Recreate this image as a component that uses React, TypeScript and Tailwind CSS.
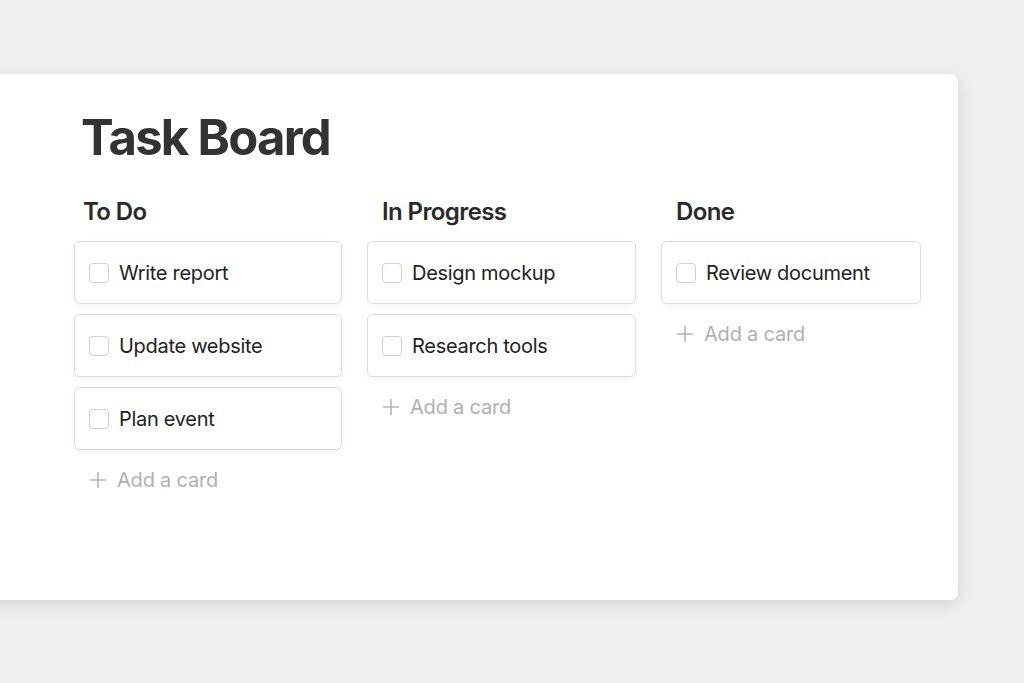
import React from "react";

type Col = { title: string; cards: string[]; w: string; hp: string };

const cols: Col[] = [
  { title: "To Do", cards: ["Write report", "Update website", "Plan event"], w: "w-[268px]", hp: "pl-[9px]" },
  { title: "In Progress", cards: ["Design mockup", "Research tools"], w: "w-[269px]", hp: "pl-[15px]" },
  { title: "Done", cards: ["Review document"], w: "w-[260px]", hp: "pl-[15px]" },
];

function Plus() {
  return (
    <svg width="18" height="18" viewBox="0 0 18 18" fill="none" stroke="#b5b5b5" strokeWidth="1.6" strokeLinecap="round">
      <path d="M9 1.5v15M1.5 9h15" />
    </svg>
  );
}

export default function App() {
  return (
    <div
      className="w-[1024px] h-[683px] bg-[#efefef] overflow-hidden pt-[74px]"
      style={{ fontFamily: "Inter, 'Noto Sans', sans-serif" }}
    >
      <div className="-ml-[20px] w-[978px] h-[526px] bg-white rounded-[8px] shadow-[0_4px_16px_rgba(0,0,0,0.12)] pl-[94px] pt-[38px]">
        <h1 className="text-[49px] leading-[52px] font-bold tracking-[-0.035em] text-[#333333] pl-[7px]">Task Board</h1>
        <div className="flex gap-[25px] mt-[33px]">
          {cols.map((c) => (
            <div key={c.title} className={`${c.w} flex flex-col`}>
              <div className={`text-[24px] leading-[30px] font-semibold tracking-[-0.025em] text-[#2a2a2a] ${c.hp}`}>{c.title}</div>
              <div className="flex flex-col gap-[10px] mt-[14px]">
                {c.cards.map((t) => (
                  <div key={t} className="h-[63px] bg-white border border-[#dcdcdc] rounded-[6px] shadow-[0_2px_6px_rgba(0,0,0,0.05)] flex items-center pl-[14px] gap-[10px]">
                    <div className="w-[20px] h-[20px] border-[1.5px] border-[#cfcfcb] rounded-[4px]" />
                    <span className="text-[20px] text-[#222222] tracking-[-0.015em]">{t}</span>
                  </div>
                ))}
              </div>
              <div className="flex items-center gap-[10px] pl-[15px] mt-[15px] text-[20px] text-[#b0b0b0] tracking-[-0.01em]">
                <Plus />
                <span>Add a card</span>
              </div>
            </div>
          ))}
        </div>
      </div>
    </div>
  );
}
